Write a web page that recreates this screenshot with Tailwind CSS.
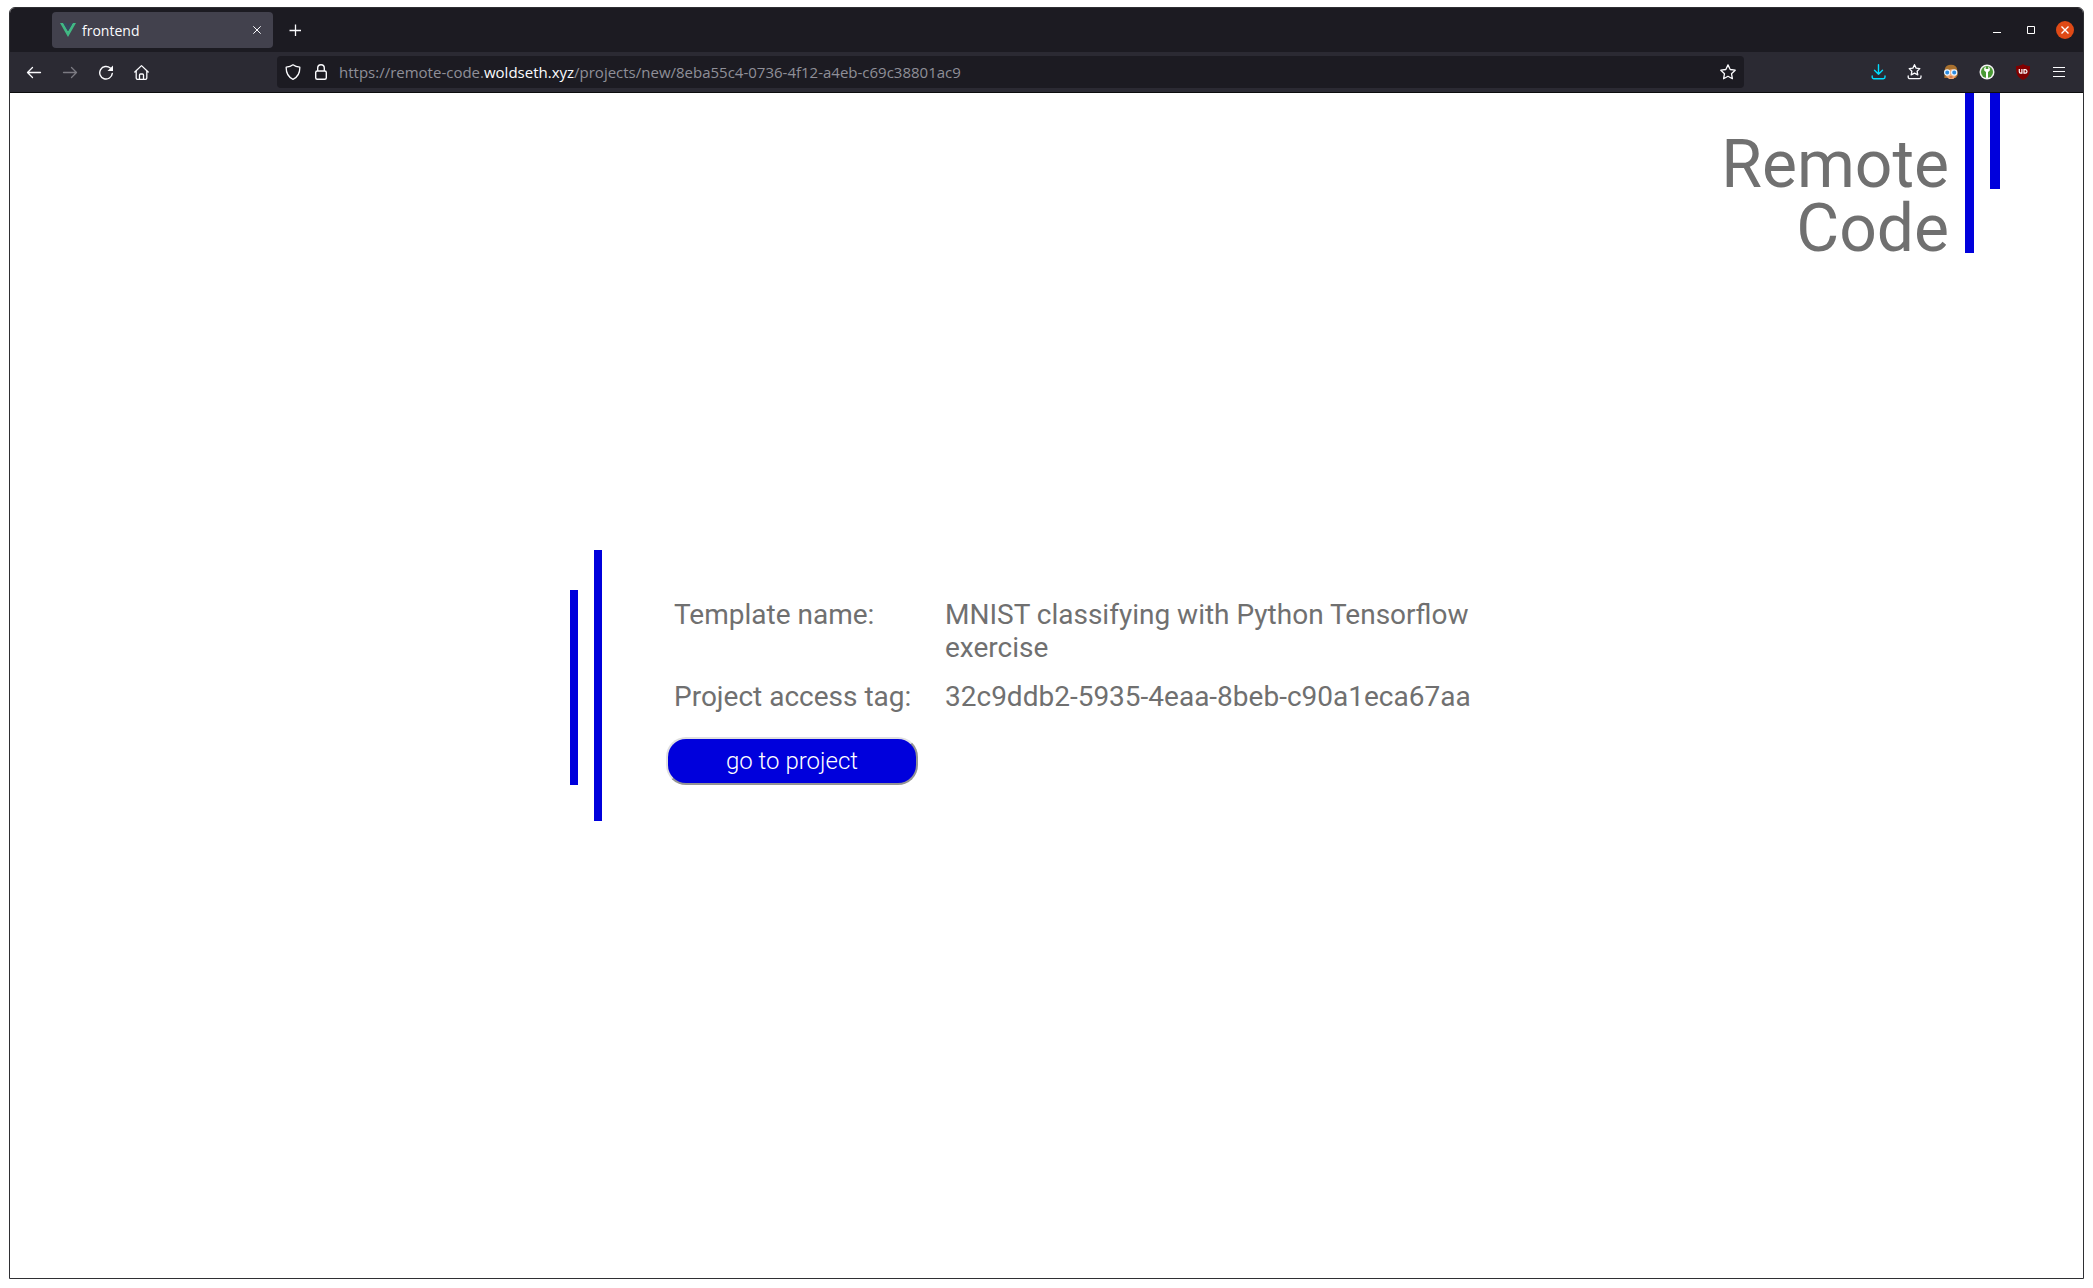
<!DOCTYPE html>
<html lang="en">
<head>
<meta charset="utf-8">
<title>frontend</title>
<script src="https://cdn.jsdelivr.net/npm/@tailwindcss/browser@4"></script>
</head>
<body class="flex min-h-screen flex-col bg-white px-[9px] pt-[7px] pb-[9px]">
<div class="flex flex-1 flex-col overflow-hidden rounded-t-md border border-[#2f2f33] bg-white">

  <!-- Tab strip -->
  <header class="flex h-11 items-center bg-[#1c1b22] pl-[42px] font-['Open_Sans',sans-serif] text-[#fbfbfe]">
    <div class="flex h-9 w-[221px] items-center rounded-sm bg-[#42414d] pr-2 pl-2">
      <svg class="h-4 w-4" viewBox="0 0 16 16"><path fill="#41b883" d="M0 1h3.2L8 9.3 12.8 1H16L8 14.9z"/><path fill="#35495e" d="M3.2 1h3L8 4.2 9.800 1h3L8 9.300z"/></svg>
      <span class="ml-1.5 flex-1 pt-0.5 text-[14px] leading-5">frontend</span>
      <button aria-label="Close tab" class="flex h-4 w-4 items-center justify-center"><svg class="h-2 w-2" viewBox="0 0 8 8" fill="none" stroke="currentColor"><path d="M.3.3l7.400 7.400M7.700.3L.3 7.700"/></svg></button>
    </div>
    <button aria-label="New tab" class="ml-2 flex h-7 w-7 items-center justify-center"><svg class="h-3 w-3" viewBox="0 0 12 12" fill="none" stroke="currentColor" stroke-width="1.300"><path d="M6.500 .5v12M.5 6.500h12"/></svg></button>
    <div class="flex-1"></div>
    <button aria-label="Minimize" class="flex h-8 w-[34px] items-center justify-center"><svg class="h-3 w-3" viewBox="0 0 12 12"><path fill="#fff" d="M2 8h8v1H2z"/></svg></button>
    <button aria-label="Maximize" class="flex h-8 w-[34px] items-center justify-center"><svg class="h-2 w-2" viewBox="0 0 8 8" fill="none" stroke="#fff"><path d="M.5.5h7v7h-7z"/></svg></button>
    <button aria-label="Close window" class="mr-px flex h-8 w-[34px] items-center justify-center"><svg class="h-[18px] w-[18px]" viewBox="0 0 18 18"><circle cx="9" cy="9" r="9" fill="#df4a16"/><path stroke="#fff" stroke-width="1.400" d="M5.500 5.500l7 7M12.500 5.500l-7 7"/></svg></button>
  </header>

  <!-- Navigation toolbar -->
  <nav class="flex h-[41px] items-center border-b border-[#0c0c0d] bg-[#2b2a33] px-1.5 font-['Open_Sans',sans-serif] text-[#fbfbfe]">
    <button aria-label="Back" class="flex h-8 w-9 items-center justify-center"><svg class="h-4 w-4" viewBox="0 0 16 16" fill="none" stroke="currentColor" stroke-width="1.300" stroke-linecap="round" stroke-linejoin="round"><path d="M14.500 8.500H1.500M6.500 3.500l-5 5 5 5"/></svg></button>
    <button aria-label="Forward" disabled class="flex h-8 w-9 items-center justify-center text-[#7b7a82]"><svg class="h-4 w-4" viewBox="0 0 16 16" fill="none" stroke="currentColor" stroke-width="1.300" stroke-linecap="round" stroke-linejoin="round"><path d="M1.500 8.500h13M9.500 3.500l5 5-5 5"/></svg></button>
    <button aria-label="Reload" class="flex h-8 w-9 items-center justify-center"><svg class="h-4 w-4" viewBox="0 0 16 16" fill="none" stroke="currentColor" stroke-width="1.400" stroke-linecap="round"><path d="M12.300 4.100A6.300 6.300 0 1 0 14.300 9.400"/><path fill="currentColor" stroke="none" d="M15 1.500v5a.5.5 0 0 1-.5.500h-5z"/></svg></button>
    <button aria-label="Home" class="flex h-8 w-9 items-center justify-center"><svg class="h-4 w-4" viewBox="0 0 16 16" fill="none" stroke="currentColor" stroke-width="1.300" stroke-linecap="round" stroke-linejoin="round"><path d="M.8 8L7.500 1.600l6.700 6.400M2.200 7v7a1.300 1.300 0 0 0 1.300 1.300h8a1.300 1.300 0 0 0 1.300-1.300V7M5.500 15v-4a1 1 0 0 1 1-1h2a1 1 0 0 1 1 1v4"/></svg></button>
    <div class="w-[117px]"></div>
    <div class="flex h-8 flex-1 items-center rounded-sm bg-[#1c1b22] px-2">
      <svg class="h-4 w-4" viewBox="0 0 16 16" fill="none" stroke="currentColor" stroke-width="1.300" stroke-linejoin="round"><path d="M8 .8c2 1.500 4.300 2.100 6.800 2.300.2 5.400-1.600 9.800-6.800 12.200C2.800 12.900 1 8.500 1.200 3.100 3.700 2.900 6 2.300 8 .8z"/></svg>
      <svg class="ml-3 h-4 w-4" viewBox="0 0 16 16" fill="none" stroke="currentColor" stroke-width="1.400"><rect x="2.700" y="7" width="10.600" height="8.300" rx="1.500"/><path d="M4.700 7V4a3.300 3.300 0 0 1 6.600 0v3"/></svg>
      <a href="#" class="ml-2.5 flex-1 text-[15px] leading-5 text-[#8f8f98]">https://remote-code.<span class="text-[#fbfbfe]">woldseth.xyz</span>/projects/new/8eba55c4-0736-4f12-a4eb-c69c38801ac9</a>
      <button aria-label="Bookmark" class="flex h-4 w-4 items-center justify-center"><svg class="h-4 w-4" viewBox="0 0 16 16" fill="none" stroke="currentColor" stroke-width="1.300" stroke-linejoin="round"><path d="M8 .9l2.200 4.600 5 .7-3.700 3.500.9 5L8 12.300l-4.400 2.400.9-5L.8 6.200l5-.7z"/></svg></button>
    </div>
    <div class="w-[117px]"></div>
    <button aria-label="Downloads" class="flex h-8 w-9 items-center justify-center text-[#00ddff]"><svg class="h-4 w-4" viewBox="0 0 16 16" fill="none" stroke="currentColor" stroke-width="1.400" stroke-linecap="round" stroke-linejoin="round"><path d="M7.500 .8v9.500M3.500 6.300l4 4 4-4M1.200 12v1a1.700 1.700 0 0 0 1.700 1.700h9.400a1.700 1.700 0 0 0 1.700-1.700v-1"/></svg></button>
    <button aria-label="Bookmarks menu" class="flex h-8 w-9 items-center justify-center"><svg class="h-4 w-4" viewBox="0 0 16 16" fill="none" stroke="currentColor" stroke-width="1.300" stroke-linecap="round" stroke-linejoin="round"><path d="M7.500 .7l1.600 3.400 3.700.5-2.700 2.600.7 3.700-3.300-1.800-3.300 1.800.7-3.700-2.700-2.600 3.700-.5zM1.200 12v1a1.700 1.700 0 0 0 1.700 1.700h9.400a1.700 1.700 0 0 0 1.700-1.700v-1"/></svg></button>
    <button aria-label="Privacy extension" class="flex h-8 w-9 items-center justify-center"><svg class="h-4 w-4" viewBox="0 0 16 16"><path fill="#a9712f" d="M1.300 14L1.800 5Q3 .8 8 .8q5.500 0 6.200 4.700l.6 5.500-2 3z"/><path fill="#f0a873" d="M3 7l6-2L13.500 7v4l-3 4H6l-3-3z"/><circle cx="4.200" cy="8.500" r="2.600" fill="#2b8be0" stroke="#e8f3ff" stroke-width="1.200"/><circle cx="11.200" cy="8.500" r="2.600" fill="#2b8be0" stroke="#e8f3ff" stroke-width="1.200"/><path stroke="#b5502f" d="M6.500 13h3"/></svg></button>
    <button aria-label="Password extension" class="flex h-8 w-9 items-center justify-center"><svg class="h-4 w-4" viewBox="0 0 16 16"><circle cx="8" cy="8" r="7.500" fill="#f2f2f2"/><circle cx="8" cy="8" r="6" fill="#4a9a35"/><path fill="#fff" d="M5.200 4l1.500-1.500V5h2.600V2.500L10.800 4v2.500L9 8v6H7V8L5.200 6.500z"/></svg></button>
    <button aria-label="uBlock" class="flex h-8 w-9 items-center justify-center"><svg class="h-4 w-4" viewBox="0 0 16 16"><path fill="#800000" d="M8 0c2 1.500 4.500 2 7 2 0 7-.5 11-7 14C1.500 13 1 9 1 2c2.500 0 5-.5 7-2z"/><path fill="none" stroke="#fff" stroke-width="1.200" d="M4.300 5v2.800q0 1.300 1.300 1.300h1.300V5M9 5.600v3.500h1.300q1.700 0 1.700-1.700t-1.700-1.800z"/></svg></button>
    <button aria-label="Menu" class="flex h-8 w-9 items-center justify-center"><svg class="h-4 w-4" viewBox="0 0 16 16" stroke="currentColor"><path d="M2 3.500h12M2 7.500h12M2 12.500h12"/></svg></button>
  </nav>

  <!-- Page -->
  <main class="relative flex flex-1 items-center justify-center font-[Roboto,sans-serif] text-[#707070]">
    <div class="absolute top-0 right-[83px] flex items-start">
      <h1 class="mt-10 mr-4 text-right text-[66px] leading-[64px]">Remote<br>Code</h1>
      <div class="mr-4 h-40 w-[9px] bg-[#0000dc]"></div>
      <div class="h-24 w-2.5 bg-[#0000dc]"></div>
    </div>

    <section class="flex w-[953px] items-start">
      <div class="mt-10 h-[195px] w-2 bg-[#0000dc]"></div>
      <div class="ml-4 h-[271px] w-2 bg-[#0000dc]"></div>
      <div class="mt-12 ml-16 flex-1">
        <dl class="ml-2 grid grid-cols-[271px_1fr] gap-y-4 text-[28px] leading-[33px]">
          <dt>Template name:</dt>
          <dd>MNIST classifying with Python Tensorflow exercise</dd>
          <dt>Project access tag:</dt>
          <dd>32c9ddb2-5935-4eaa-8beb-c90a1eca67aa</dd>
        </dl>
        <button class="mt-6 h-12 w-[252px] rounded-[20px] border-2 border-t-[#e0e0e0] border-r-[#949494] border-b-[#949494] border-l-[#e0e0e0] bg-[#0000dc] text-[24px] leading-7 font-light text-white">go to project</button>
      </div>
    </section>
  </main>
</div>
</body>
</html>
